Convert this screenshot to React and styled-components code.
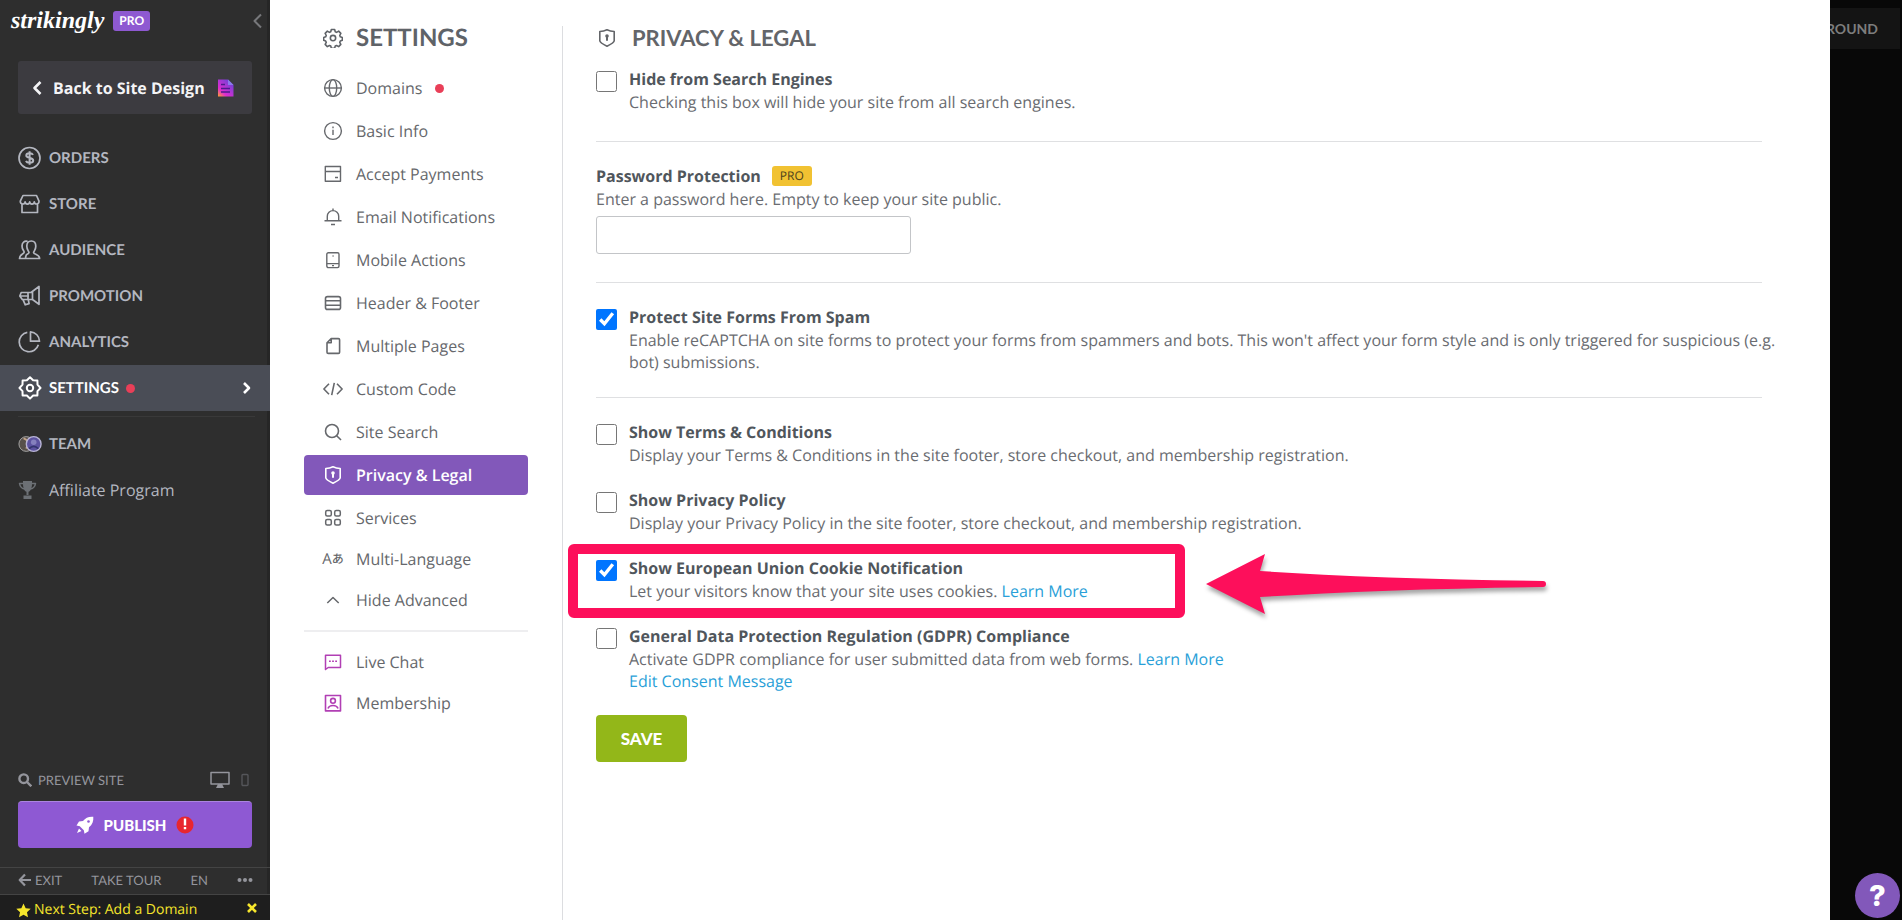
import { useState } from 'react'
import styled, { createGlobalStyle, css } from 'styled-components'

const GlobalStyle = createGlobalStyle`
  * {
    box-sizing: border-box;
  }
  body {
    margin: 0;
    font-family: 'Open Sans', 'Noto Sans', sans-serif;
    font-size: 16px;
    text-rendering: geometricPrecision;
    color: #636569;
    background: #080808;
  }
  button, input {
    font-family: inherit;
  }
  a {
    text-decoration: none;
  }
`

const caps = css`
  font-family: Lato, sans-serif;
  text-transform: uppercase;
`

const Page = styled.div`
  display: flex;
  height: 100vh;
  overflow: hidden;
`

/* ---------- dark sidebar ---------- */

const Sidebar = styled.aside`
  flex: 0 0 270px;
  display: flex;
  flex-direction: column;
  background: #2e2e2e;
  box-shadow: inset -3px 0 #262626;
`

const Brand = styled.header`
  display: flex;
  align-items: center;
  gap: 9px;
  height: 42px;
  padding: 0 6px 0 11px;
`

const Logo = styled.a`
  font-family: 'Liberation Serif', serif;
  font-size: 24px;
  line-height: 36px;
  font-weight: bold;
  font-style: italic;
  color: #fff;
`

const PlanBadge = styled.span`
  ${caps}
  padding: 0 6px;
  border-radius: 3px;
  font-size: 12px;
  line-height: 20px;
  font-weight: 700;
  color: #fff;
  background: #8e59d1;
`

const IconButton = styled.button`
  display: flex;
  padding: 0;
  border: 0;
  background: none;
  color: ${props => props.$color || '#77787b'};
  cursor: pointer;
`

const Collapse = styled(IconButton)`
  margin-left: auto;
`

const BackLink = styled.a`
  display: flex;
  align-items: center;
  gap: 11px;
  height: 53px;
  margin: 19px 18px 21px;
  padding: 0 18px 0 14px;
  border-radius: 3px;
  background: #3c3b40;
  color: #f4f4f6;
  font-weight: 700;
  white-space: nowrap;

  svg:last-child {
    margin-left: auto;
  }
`

const SideNav = styled.nav`
  display: flex;
  flex-direction: column;
`

const SideLink = styled.a`
  ${props => props.$plain ? '' : caps}
  display: flex;
  align-items: center;
  gap: 7px;
  height: 46px;
  padding: 0 18px;
  font-size: ${props => props.$plain ? 16 : 15}px;
  font-weight: ${props => props.$plain ? 400 : 700};
  color: ${props => props.$active ? '#fff' : '#b4b7c0'};
  background: ${props => props.$active ? '#4a4d56' : 'transparent'};

  svg:last-child {
    margin-left: auto;
  }
`

const SideDivider = styled.hr`
  width: 237px;
  margin: 5px 0 4px 18px;
  border: 0;
  border-top: 1px solid #393939;
`

const Dot = styled.span`
  width: 9px;
  height: 9px;
  border-radius: 50%;
  background: #e93f58;
`

const SideBottom = styled.div`
  margin-top: auto;
`

const PreviewRow = styled.div`
  ${caps}
  display: flex;
  align-items: center;
  gap: 6px;
  height: 34px;
  padding: 0 20px 2px 18px;
  font-size: 13px;
  color: #94959c;
`

const Devices = styled.div`
  display: flex;
  align-items: center;
  gap: 10px;
  margin-left: auto;
`

const Publish = styled.button`
  ${caps}
  display: flex;
  align-items: center;
  justify-content: center;
  gap: 10px;
  width: calc(100% - 36px);
  height: 47px;
  margin: 3px 18px 19px;
  border: 0;
  border-top: 1px solid #ab84e0;
  border-radius: 4px;
  background: #8e59d3;
  color: #fff;
  font-size: 15px;
  font-weight: 900;
  cursor: pointer;
`

const FooterBar = styled.div`
  display: flex;
  align-items: center;
  justify-content: space-between;
  height: 28px;
  padding: 0 17px 2px 18px;
  border-top: 1px solid #444;
  border-bottom: 1px solid #444;
`

const FooterLink = styled.a`
  ${caps}
  display: flex;
  align-items: center;
  gap: 4px;
  font-size: 13px;
  color: #94959c;
`

const NextStep = styled.div`
  display: flex;
  align-items: flex-start;
  justify-content: space-between;
  height: 25px;
  padding: 4px 12px 0 16px;
  overflow: hidden;
  background: #1e1e1e;
  color: #f6e62c;
`

const NextLink = styled.a`
  display: flex;
  align-items: center;
  gap: 3px;
  font-size: 14px;
  line-height: 22px;
  color: inherit;
`

/* ---------- settings panel ---------- */

const Panel = styled.div`
  flex: 1;
  min-width: 0;
  display: flex;
  padding-top: 26px;
  background: #fff;
`

const Menu = styled.nav`
  flex: 0 0 293px;
  padding: 0 34px;
  border-right: 1px solid #dcdde0;
`

const MenuTitle = styled.h1`
  ${caps}
  display: flex;
  align-items: center;
  gap: 13px;
  height: 24px;
  margin: 0 0 18px;
  padding-left: 19px;
  font-size: 24px;
  line-height: 24px;
  font-weight: 700;
  color: #5f6368;
`

const MenuGroup = styled.div`
  display: flex;
  flex-direction: column;
  gap: ${props => props.$tight ? 1 : 3}px;

  & + & {
    padding-top: 1px;
  }
`

const MenuLink = styled.a`
  display: flex;
  align-items: center;
  gap: 13px;
  height: 40px;
  padding-left: 19px;
  border-radius: 4px;
  font-weight: ${props => props.$active ? 600 : 500};
  color: ${props => props.$active ? '#fff' : '#66686c'};
  background: ${props => props.$active ? '#8258ba' : 'transparent'};
`

const MenuDivider = styled.hr`
  margin: 10px 0;
  border: 0;
  border-top: 2px solid #eeeef0;
`

const Content = styled.main`
  flex: 1;
  min-width: 0;
  padding: 0 68px 0 33px;
`

const ContentTitle = styled.h2`
  ${caps}
  display: flex;
  align-items: center;
  gap: 15px;
  height: 24px;
  margin: 0 0 17px;
  padding-left: 1px;
  font-size: 22px;
  line-height: 24px;
  font-weight: 700;
  color: #636569;
`

const Section = styled.section`
  display: flex;
  flex-direction: column;
  gap: 22px;
  padding-bottom: ${props => props.$space || 0}px;

  & + & {
    padding-top: 22px;
    border-top: 1px solid #dfe0e2;
  }
`

const Option = styled.div`
  position: relative;
  display: grid;
  grid-template-columns: 21px 1fr;
  column-gap: 12px;
`

const Check = styled.input`
  width: 21px;
  height: 21px;
  margin: 4px 0 0;
  accent-color: #0075ff;
`

const Title = styled.label`
  display: block;
  line-height: 24px;
  font-weight: 700;
  color: #50565c;
`

const Text = styled.p`
  margin: 0 -20px 0 0;
  line-height: 22px;
  color: #6a6c71;
`

const Link = styled.a`
  color: #2a9fd8;
`

const TitleRow = styled.div`
  display: flex;
  align-items: center;
  gap: 11px;
  height: 24px;
`

const ProTag = styled.span`
  padding: 0 8px;
  border-radius: 3px;
  font-size: 12px;
  line-height: 20px;
  font-weight: 500;
  color: #4e431c;
  background: #f1c232;
`

const PasswordInput = styled.input`
  display: block;
  width: 315px;
  height: 38px;
  margin-top: 6px;
  padding: 0 10px;
  border: 1px solid #c3c5c8;
  border-radius: 3px;
  font-size: 16px;
`

const Save = styled.button`
  ${caps}
  width: 91px;
  height: 47px;
  margin-top: 23px;
  border: 0;
  border-radius: 4px;
  background: #93b719;
  color: #fff;
  font-size: 17px;
  font-weight: 900;
  cursor: pointer;
`

/* callout drawn over the highlighted option */
const Frame = styled.div`
  position: absolute;
  left: -28px;
  top: -12px;
  width: 617px;
  height: 74px;
  border: 10px solid #fd0f5b;
  border-radius: 6px;
  pointer-events: none;
`

const Arrow = styled.svg`
  position: absolute;
  left: 608px;
  top: -4px;
  filter: drop-shadow(1px 4px 2px rgba(0, 0, 0, 0.35));
  pointer-events: none;
`

/* ---------- site canvas behind the panel ---------- */

const Canvas = styled.div`
  flex: 0 0 72px;
  display: flex;
  flex-direction: column;
  align-items: flex-end;
  justify-content: space-between;
  padding: 8px 2px 2px 0;
  overflow: hidden;
  background: #080808;
`

const BackgroundButton = styled.button`
  ${caps}
  display: flex;
  justify-content: flex-end;
  align-items: center;
  width: 100%;
  height: 41px;
  padding: 0 22px 0 0;
  border: 0;
  background: #141414;
  color: #7d7d7d;
  font-size: 14px;
  font-weight: 700;
`

const Help = styled.button`
  width: 45px;
  height: 45px;
  padding: 0;
  border: 0;
  border-radius: 50%;
  background: #8258ba;
  color: #fff;
  font-family: Inter, sans-serif;
  font-size: 29px;
  line-height: 45px;
  font-weight: 800;
`

/* ---------- icons ---------- */

const Svg = styled.svg`
  flex: none;
  display: block;
  fill: none;
  stroke: currentColor;
  stroke-linejoin: round;
`

const Icon = ({ w = 1.4, children }) =>
  <Svg width="20" height="20" viewBox="0 0 20 20" strokeWidth={w} aria-hidden="true">{children}</Svg>

const SideIcon = ({ children }) =>
  <Svg width="24" height="24" viewBox="0 0 24 24" strokeWidth="1.7" aria-hidden="true">{children}</Svg>

const icons = {
  domains: <Icon><circle cx="10" cy="10" r="8.4" /><ellipse cx="10" cy="10" rx="3.7" ry="8.4" /><path d="M1.6 10h16.8" /></Icon>,
  info: <Icon><circle cx="10" cy="10" r="8.4" /><path d="M10 8.7v5.2M10 5.6v1.6" /></Icon>,
  payments: <Icon><path d="M2.3 2.5h15.2v14.8H2.3zM2.3 7.5h15.2M12 13.5h3" /></Icon>,
  bell: <Icon><path d="M1.5 13.8h17M4.3 13.8V9.3a5.7 5.7 0 0 1 11.4 0v4.5M10 1.6v2M8 17.5h4" /></Icon>,
  mobile: <Icon><rect x="3.8" y="2.8" width="12.2" height="14.8" rx="1.5" /><path d="M3.8 13.6H16M9 15.6h2M9.3 6h1.6" strokeWidth="1.2" /></Icon>,
  header: <Icon w={1.6}><rect x="2.5" y="3.6" width="15" height="12.8" rx="2" /><path d="M2.5 7.8h15M2.5 12.2h15" /></Icon>,
  pages: <Icon w={1.6}><path d="M8.2 2.6h7.2q1.2 0 1.2 1.2v12.4q0 1.2-1.2 1.2H5.2Q4 17.4 4 16.2V6.8zM8.2 2.6v4.2H4" /></Icon>,
  code: <Icon w={1.6}><path d="M6 4.700.9 10 6 15.3M14 4.700l5.100 5.300-5.100 5.300M11.300 3.800 8.700 16.200" /></Icon>,
  search: <Icon w={1.6}><circle cx="9" cy="9" r="6.5" /><path d="m13.7 13.7 4.3 4.3" /></Icon>,
  shield: <Icon w={1.6}><path d="M10 1.8c2.300 1.100 4.600 1.600 7.200 1.700v9.300c0 1.600-3 3.400-7.200 5.400-4.200-2-7.200-3.800-7.200-5.400V3.500C5.400 3.400 7.700 2.900 10 1.800z" /><circle cx="10" cy="8" r="1" fill="currentColor" /><path d="M10 8v4.800" strokeWidth="2" /></Icon>,
  services: <Icon w={1.5}><rect x="2.7" y="2.5" width="5.6" height="5.6" rx="1.5" /><rect x="11.7" y="2.5" width="5.6" height="5.6" rx="1.5" /><rect x="2.7" y="11.5" width="5.6" height="5.6" rx="1.5" /><rect x="11.7" y="11.5" width="5.6" height="5.6" rx="1.5" /></Icon>,
  up: <Icon w={1.5}><path d="m4.300 13 5.700-5.500 5.700 5.500" /></Icon>,
  chat: <Icon w={1.5}><path d="M2.500 3.200h15v12.300H5.200l-2.700 2zM6 9.300h1.800M9.100 9.300h1.800M12.200 9.300H14" stroke="#b13fb4" /></Icon>,
  member: <Icon w={1.6}><g stroke="#b13fb4"><rect x="2.5" y="2.5" width="15" height="15.4" /><circle cx="10" cy="7.8" r="2.4" /><path d="M5 15.500c.8-2.400 2.500-3 5-3s4.200.6 5 3" /></g></Icon>
}

const gear = 'M12 1.300l3.100 3 4.300.1.1 4.300 3 3.300-3 3.100-.1 4.300-4.300.1-3.100 3.100-3.100-3.100-4.300-.1-.1-4.300L1.500 12l3-3.300.1-4.300 4.300-.1z'

const sideIcons = {
  orders: <SideIcon><circle cx="11.5" cy="12" r="10.5" /><path d="M15 8.900c-.5-1-1.700-1.600-3.400-1.600-2 0-3.300.8-3.300 2.200 0 3.300 6.900 1.500 6.900 4.900 0 1.500-1.400 2.300-3.500 2.300-1.900 0-3.200-.7-3.700-1.900M11.600 5.300v13.400" strokeWidth="2" /></SideIcon>,
  store: <SideIcon><path d="M5 3.500h13.500L21 9.200c0 3.600-4.700 3.600-4.700.6 0 3-4.600 3-4.600 0 0 3-4.600 3-4.600 0 0 3-4.800 3-4.800-.6zM4 12.300V20.500h15.500v-8.200" /></SideIcon>,
  audience: <SideIcon><path d="M8 16.800c1.400-.7 2.800-1.100 3-2.200 0-1.300-2.200-2.400-2.200-6.300C8.800 4.700 10.700 3 13.300 3s4.500 1.700 4.500 5.300c0 3.900-2.200 5-2.200 6.300.2 2 6 1.700 6 5.900H7.500M9.500 3.400C6.400 2.600 4 4.600 4 8c0 3.700 2.200 4.800 2.200 6.200-.2 2-4.700 1.900-4.700 6.300h6c0-1.700.2-2.600 1-3.600" /></SideIcon>,
  promotion: <SideIcon><path d="M21 2.500v17.800L14.500 15.500H4.300L1.800 12 3.200 8.500H13zM10 8.600v6.800M14.500 8v7.500M5 15.600l2.300 5.200 3.800-1.200-.8-3.800M2 12h9" /></SideIcon>,
  analytics: <SideIcon><path d="M9.300 2.300A9.800 9.800 0 1 0 20.400 14.800M12.500 1.900v9.300h9a9.500 9.500 0 0 0-9-9.300z" /></SideIcon>,
  settings: <SideIcon><path d={gear} strokeWidth="2" /><circle cx="12" cy="12" r="3.2" strokeWidth="2" /></SideIcon>,
  team: <Svg width="24" height="20" viewBox="0 0 26 20" aria-hidden="true"><circle cx="9" cy="10" r="8" fill="#57504b" stroke="#aaa" /><path d="M6 4q7 2 3 11" stroke="#c3a58a" strokeWidth="2" /><circle cx="17" cy="10" r="8" fill="#5c529f" stroke="#b9b4d6" strokeWidth="1.5" /><circle cx="17" cy="8" r="3" fill="#8580bd" stroke="none" /><path d="M12 15q5-5 10 0" stroke="#33346d" strokeWidth="2" /></Svg>,
  trophy: <Svg width="24" height="20" viewBox="0 0 24 20" aria-hidden="true"><path d="M5 1h9v3c0 5-2 8-4.500 8S5 9 5 4zM8.500 11h2v4h-2zM5.500 15.500h8V19h-8z" fill="#6c7075" stroke="none" /><path d="M5 3.500H1.500C2 7 4 8.500 6.500 9M14 3.500h3.500C17 7 15 8.500 12.500 9" stroke="#6c7075" strokeWidth="1.5" /></Svg>
}

const Glyph = styled.span`
  display: flex;
  justify-content: center;
  align-items: center;
  width: 20px;
  font-family: 'Open Sans', 'Noto Sans CJK JP', sans-serif;
  font-size: 15px;
  line-height: 20px;

  small {
    font-size: 12px;
    line-height: 16px;
  }
`

const sideLinks = [
  ['orders', 'Orders'],
  ['store', 'Store'],
  ['audience', 'Audience'],
  ['promotion', 'Promotion'],
  ['analytics', 'Analytics'],
  ['settings', 'Settings']
]

const mainMenu = [
  ['domains', 'Domains'],
  ['info', 'Basic Info'],
  ['payments', 'Accept Payments'],
  ['bell', 'Email Notifications'],
  ['mobile', 'Mobile Actions'],
  ['header', 'Header & Footer'],
  ['pages', 'Multiple Pages'],
  ['code', 'Custom Code'],
  ['search', 'Site Search'],
  ['shield', 'Privacy & Legal'],
  ['services', 'Services']
]

function SideBar() {
  return <Sidebar>
    <Brand>
      <Logo href="#">strikingly</Logo>
      <PlanBadge>Pro</PlanBadge>
      <Collapse aria-label="Collapse sidebar">
        <Svg width="12" height="16" viewBox="0 0 12 16" strokeWidth="2"><path d="M9 1.500 2.500 8 9 14.500" /></Svg>
      </Collapse>
    </Brand>
    <BackLink href="#">
      <Svg width="10" height="16" viewBox="0 0 10 16" strokeWidth="2.6"><path d="M8.500 2 2.500 8l6 6" /></Svg>
      Back to Site Design
      <Svg width="17" height="18" viewBox="0 0 17 18" aria-hidden="true">
        <defs>
          <linearGradient id="page" x1="0" y1="1" x2="0.9" y2="0">
            <stop offset="0" stopColor="#ffa02e" />
            <stop offset="0.3" stopColor="#e02bd0" />
            <stop offset="1" stopColor="#5b46d8" />
          </linearGradient>
        </defs>
        <path d="M1 .5h10L16.500 6v11.500H1z" fill="url(#page)" stroke="none" />
        <path d="M4 5.500h4M4 9.500h9M4 13h9" stroke="#4b1c8c" strokeWidth="1.5" />
        <path d="M11 .5V6h5.500" fill="#8a7bea" stroke="none" />
      </Svg>
    </BackLink>
    <SideNav>
      {sideLinks.map(([id, label]) => <SideLink key={id} href="#" $active={id === 'settings'}>
        {sideIcons[id]}
        <span>{label}</span>
        {id === 'settings' && <>
          <Dot />
          <Svg width="10" height="14" viewBox="0 0 10 14" strokeWidth="2.6"><path d="m2 2 5 5-5 5" /></Svg>
        </>}
      </SideLink>)}
      <SideDivider />
      <SideLink href="#">{sideIcons.team}<span>Team</span></SideLink>
      <SideLink href="#" $plain>{sideIcons.trophy}<span>Affiliate Program</span></SideLink>
    </SideNav>
    <SideBottom>
      <PreviewRow>
        <Svg width="14" height="14" viewBox="0 0 14 14" strokeWidth="2.4"><circle cx="5.7" cy="5.7" r="4.3" /><path d="m9 9 4.300 4.300" /></Svg>
        Preview Site
        <Devices>
          <IconButton aria-label="Desktop preview" $color="#94959c">
            <Svg width="20" height="18" viewBox="0 0 20 18" strokeWidth="1.5"><path d="M1 1.500h18V13H1z" /><path d="M8 13h4l2 4H6z" fill="currentColor" stroke="none" /></Svg>
          </IconButton>
          <IconButton aria-label="Mobile preview" $color="#55565a">
            <Svg width="10" height="14" viewBox="0 0 10 14" strokeWidth="1.4"><rect x="2" y="1.5" width="6" height="11" rx="1" /></Svg>
          </IconButton>
        </Devices>
      </PreviewRow>
      <Publish>
        <Svg width="18" height="18" viewBox="0 0 18 18"><path d="M17.300.7c.4 4.800-1 8-4.300 10.500l-.5 4-4 2.500-.7-3.500-4-4L.5 9.500l2.500-4 4-.5C9.500 1.700 12.500.4 17.300.7zM3 12.500l2.500 2.600L1 17z" fill="currentColor" stroke="none" /><circle cx="12.5" cy="5.5" r="1.3" fill="#8e59d3" stroke="none" /></Svg>
        Publish
        <Svg width="18" height="18" viewBox="0 0 18 18"><circle cx="9" cy="9" r="8.5" fill="#e8262f" stroke="none" /><path d="M9 2.500v7M9 11v2.300" strokeWidth="2.4" /></Svg>
      </Publish>
      <FooterBar>
        <FooterLink href="#">
          <Svg width="13" height="14" viewBox="0 0 13 14" strokeWidth="2.2"><path d="M7 1.500 1.700 7 7 12.500M1.700 7H13" /></Svg>
          Exit
        </FooterLink>
        <FooterLink href="#">Take Tour</FooterLink>
        <FooterLink href="#">EN</FooterLink>
        <IconButton aria-label="More" $color="#94959c">
          <Svg width="16" height="6" viewBox="0 0 16 6"><g fill="currentColor" stroke="none"><circle cx="2.5" cy="3" r="2" /><circle cx="8" cy="3" r="2" /><circle cx="13.5" cy="3" r="2" /></g></Svg>
        </IconButton>
      </FooterBar>
      <NextStep>
        <NextLink href="#">
          <Svg width="15" height="15" viewBox="0 0 16 16"><path d="m8 .5 2.300 5 5.400.6-4 3.700 1.100 5.400L8 12.500l-4.800 2.700 1.100-5.400-4-3.700 5.400-.6z" fill="currentColor" stroke="none" /></Svg>
          Next Step: Add a Domain
        </NextLink>
        <IconButton aria-label="Dismiss" $color="#f6e62c">
          <Svg width="12" height="18" viewBox="0 0 12 18" strokeWidth="2.6"><path d="m2 5 8 8M10 5l-8 8" /></Svg>
        </IconButton>
      </NextStep>
    </SideBottom>
  </Sidebar>
}

function SettingsMenu() {
  return <Menu>
    <MenuTitle>
      <Svg width="20" height="20" viewBox="0 0 24 24" strokeWidth="1.9"><path d="M10 1.800h4l.7 2.700 1.600.7 2.500-1.400 2.600 2.700-1.300 2.500.7 1.600 2.400.9v3.200l-2.400.9-.7 1.600 1.300 2.400-2.600 2.700-2.500-1.300-1.600.7-.7 2.500h-4l-.7-2.500-1.600-.7-2.500 1.300-2.600-2.700 1.300-2.400-.7-1.600-2.400-.9v-3.200l2.400-.9.7-1.600-1.300-2.500 2.600-2.700 2.500 1.400 1.600-.7z" /><circle cx="12" cy="12" r="3.2" /></Svg>
      Settings
    </MenuTitle>
    <MenuGroup>
      {mainMenu.map(([id, label]) => <MenuLink key={id} href="#" $active={id === 'shield'}>
        {icons[id]}
        {label}
        {id === 'domains' && <Dot />}
      </MenuLink>)}
    </MenuGroup>
    <MenuGroup $tight>
      <MenuLink href="#"><Glyph aria-hidden="true">A<small>あ</small></Glyph>Multi-Language</MenuLink>
      <MenuLink href="#">{icons.up}Hide Advanced</MenuLink>
    </MenuGroup>
    <MenuDivider />
    <MenuGroup $tight>
      <MenuLink href="#">{icons.chat}Live Chat</MenuLink>
      <MenuLink href="#">{icons.member}Membership</MenuLink>
    </MenuGroup>
  </Menu>
}

function CheckOption({ id, title, checked, children, extra }) {
  const [on, setOn] = useState(Boolean(checked))

  return <Option>
    <Check type="checkbox" id={id} checked={on} onChange={() => setOn(!on)} />
    <div>
      <Title htmlFor={id}>{title}</Title>
      {children}
    </div>
    {extra}
  </Option>
}

function PrivacySettings() {
  return <Content>
    <ContentTitle>{icons.shield}Privacy &amp; Legal</ContentTitle>
    <Section $space={28}>
      <CheckOption id="hide" title="Hide from Search Engines">
        <Text>Checking this box will hide your site from all search engines.</Text>
      </CheckOption>
    </Section>
    <Section $space={28}>
      <div>
        <TitleRow>
          <Title htmlFor="password">Password Protection</Title>
          <ProTag>PRO</ProTag>
        </TitleRow>
        <Text>Enter a password here. Empty to keep your site public.</Text>
        <PasswordInput id="password" type="text" />
      </div>
    </Section>
    <Section $space={24}>
      <CheckOption id="spam" title="Protect Site Forms From Spam" checked>
        <Text>Enable reCAPTCHA on site forms to protect your forms from spammers and bots. This won't affect your form style and is only triggered for suspicious (e.g. bot) submissions.</Text>
      </CheckOption>
    </Section>
    <Section>
      <CheckOption id="terms" title="Show Terms & Conditions">
        <Text>Display your Terms &amp; Conditions in the site footer, store checkout, and membership registration.</Text>
      </CheckOption>
      <CheckOption id="privacy" title="Show Privacy Policy">
        <Text>Display your Privacy Policy in the site footer, store checkout, and membership registration.</Text>
      </CheckOption>
      <CheckOption id="cookies" title="Show European Union Cookie Notification" checked extra={<>
        <Frame />
        <Arrow width="345" height="64" viewBox="0 0 345 64" aria-hidden="true">
          <path d="M2 32 61 2 56 19Q180 27 339 29a3 3 0 0 1 0 6Q180 37 56 45L61 62z" fill="#fd0f5b" />
        </Arrow>
      </>}>
        <Text>Let your visitors know that your site uses cookies. <Link href="#">Learn More</Link></Text>
      </CheckOption>
      <CheckOption id="gdpr" title="General Data Protection Regulation (GDPR) Compliance">
        <Text>Activate GDPR compliance for user submitted data from web forms. <Link href="#">Learn More</Link></Text>
        <Text><Link href="#">Edit Consent Message</Link></Text>
      </CheckOption>
    </Section>
    <Save>Save</Save>
  </Content>
}

function App() {
  return <>
    <GlobalStyle />
    <Page>
      <SideBar />
      <Panel>
        <SettingsMenu />
        <PrivacySettings />
      </Panel>
      <Canvas>
        <BackgroundButton>Round</BackgroundButton>
        <Help aria-label="Help">?</Help>
      </Canvas>
    </Page>
  </>
}

export default App
